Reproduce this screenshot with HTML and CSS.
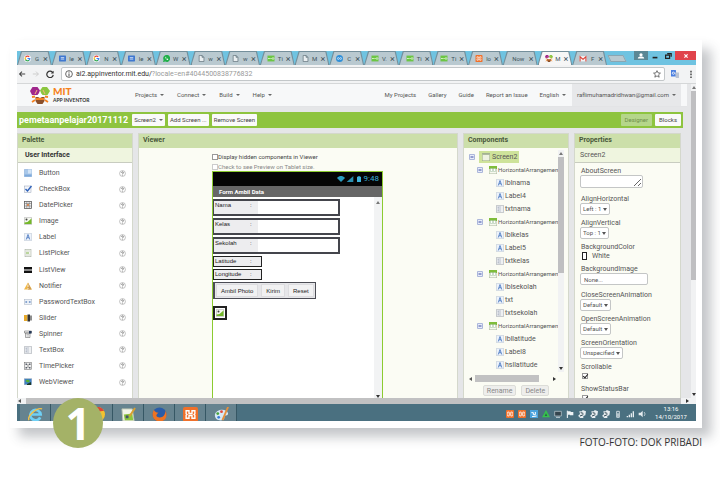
FILE: index.html
```
<!DOCTYPE html>
<html lang="en">
<head>
<meta charset="utf-8">
<title>MIT App Inventor</title>
<link rel="stylesheet" href="styles.css">
</head>
<body>
<svg class="defs" aria-hidden="true">
  <symbol id="google" viewBox="0 0 12 12"><circle cx="6" cy="6" r="6" fill="#fff"/><g fill="none" stroke-width="2"><path d="M9 3.2A4 4 0 0 0 2.6 4" stroke="#ea4335"/><path d="M2.6 4a4 4 0 0 0 0 4" stroke="#fbbc05"/><path d="M2.6 8a4 4 0 0 0 6 1" stroke="#34a853"/><path d="M8.6 9A4 4 0 0 0 10 6H6" stroke="#4285f4"/></g></symbol>
  <symbol id="docs" viewBox="0 0 12 12"><rect y="1" width="12" height="10" rx="1" fill="#3f78d0"/><path d="M3 4.5h6M3 7h6" stroke="#e3ecfa" stroke-width="1.4"/></symbol>
  <symbol id="whatsapp" viewBox="0 0 12 12"><path d="M0 12l1-3.500A6 6 0 1 1 4 11.300z" fill="#22b04a"/><path d="M4 3.500c0 3 2 5 4.500 5l.5-1.500-1.500-.8-1 .8L5 5.500l.6-1L5 3z" fill="#fff"/></symbol>
  <symbol id="page" viewBox="0 0 12 12"><path d="M2 .8h5L10.200 4v7.200H2zM7 .8V4h3" fill="#e9eef0" stroke="#60717a" stroke-width="1.200"/></symbol>
  <symbol id="green" viewBox="0 0 12 12"><rect y="1" width="12" height="10" fill="#6cc644"/><path d="M1 6h3M5 6h2" stroke="#e8ffd8" stroke-width="1.500"/><circle cx="9.500" cy="6" r="1.500" fill="none" stroke="#fff"/></symbol>
  <symbol id="cloud" viewBox="0 0 12 12"><circle cx="6" cy="6" r="6" fill="#2f8fd8"/><circle cx="4" cy="6" r="1.600" fill="none" stroke="#fff"/><circle cx="8" cy="6" r="1.600" fill="none" stroke="#fff"/></symbol>
  <symbol id="xampp" viewBox="0 0 12 12"><rect width="12" height="12" rx="1.500" fill="#f0702a"/><path d="M2.500 3h2.300v2.200h2.400V3h2.300v2.300L8.800 6l.7.700V9H7.200V6.800H4.800V9H2.500V6.700L3.200 6l-.7-.7z" fill="none" stroke="#fff" stroke-width="1.100"/></symbol>
  <symbol id="bee" viewBox="0 0 20 17"><path d="M0 4l2.500-4h5L10 3.500 8 8H2z" fill="#a0278c"/><path d="M10 3.500l2.500-3.500h4.500L20 4l-2.500 4H12z" fill="#8cc63f"/><path d="M5.500 10h9v4l-2 3h-5l-2-3z" fill="#8a4f2a"/><path d="M6 9l4-3 4 3-4 2z" fill="#fff"/><path d="M5 9.500l-3 .5M5 13l-3 2M15 9.500l3 .5M15 13l3 2M6 12h8" stroke="#f58220" stroke-width="1.800"/><path d="M7 3l-2 4M13 3l2 4" stroke="#f9b27a"/></symbol>
  <symbol id="gmail" viewBox="0 0 12 12"><rect y="2" width="12" height="9" fill="#f4f4f4"/><path d="M1 11V3l5 4.500L11 3v8" fill="none" stroke="#d93f35" stroke-width="1.800"/></symbol>
  <symbol id="help" viewBox="0 0 12 12"><circle cx="6" cy="6" r="5" fill="#fff" stroke="#999" stroke-width="1"/><path d="M4.300 4.600c.2-2 3.400-1.600 3.200.3C7.400 6 6 6 6 7.200M6 8.200v1.200" fill="none" stroke="#444" stroke-width="1.200"/></symbol>
  <symbol id="i-button" viewBox="0 0 16 16"><rect x=".5" y=".5" width="15" height="15" rx="1" fill="#a9c8ea" stroke="#7fa5d0"/><path d="M8 1h7v8H8z" fill="#d3e4f6"/><path d="M1 11h14v4H1z" fill="#7faadb"/></symbol>
  <symbol id="i-check" viewBox="0 0 16 16"><rect x="1" y="2" width="13" height="13" fill="#f3f5fa" stroke="#98a4b8"/><path d="M3 8l4 4 8-10" fill="none" stroke="#2c5fb8" stroke-width="2.800"/></symbol>
  <symbol id="i-date" viewBox="0 0 16 16"><rect x="1" y="1" width="14" height="14" fill="#eee" stroke="#555" stroke-width="1.500"/><path d="M1 5h14M5.500 1v14M10.500 1v14M1 10h14" stroke="#666"/><rect x="6" y="6" width="4" height="4" fill="#d78a56"/></symbol>
  <symbol id="i-image" viewBox="0 0 16 16"><rect x=".5" y="1.500" width="15" height="13" fill="#f5f8f0" stroke="#aaa"/><circle cx="5" cy="5" r="2" fill="#444"/><path d="M1 14v-3l6-1 8-7v11z" fill="#74b82a"/></symbol>
  <symbol id="i-label" viewBox="0 0 16 16"><rect x=".5" y=".5" width="15" height="15" rx="1" fill="#edf3fb" stroke="#a9b5c5"/><path d="M4.500 13L8 3l3.500 10M6 9.500h4" fill="none" stroke="#3f70bd" stroke-width="1.600"/></symbol>
  <symbol id="i-list" viewBox="0 0 16 16"><rect x="2" y=".5" width="12" height="15" fill="#f4f6f0" stroke="#9aa396"/><path d="M4 4h8M4 12h8" stroke="#b6beb0"/><path d="M4 8h6" stroke="#80b44a" stroke-width="2"/></symbol>
  <symbol id="i-view" viewBox="0 0 16 16"><path d="M0 2h16v5H0zM0 9h16v5H0z" fill="#111"/></symbol>
  <symbol id="i-note" viewBox="0 0 16 16"><path d="M8 1l8 14H0z" fill="#efb748"/><path d="M8 2v13h7z" fill="#c99a5a"/><path d="M8 5v5M8 12v2" stroke="#fff" stroke-width="1.500"/></symbol>
  <symbol id="i-pass" viewBox="0 0 16 16"><rect x=".5" y="3" width="15" height="10" fill="#edf2f8" stroke="#a7b2c2"/><path d="M3 6l3 4M6 6l-3 4M10 6l3 4M13 6l-3 4" stroke="#4c77b8" stroke-width="1.200"/></symbol>
  <symbol id="i-slider" viewBox="0 0 16 16"><rect y="2" width="7" height="12" fill="#e6a92b"/><rect x="7" y="1" width="5" height="14" fill="#333"/><rect x="12" y="3" width="4" height="10" fill="#8d8d8d"/></symbol>
  <symbol id="i-spin" viewBox="0 0 16 16"><path d="M1 2h14v4H1zM3 6h9v9H3z" fill="#f4f4f4" stroke="#555"/><path d="M10 2h5v5h-5z" fill="#263a5b"/><path d="M5 9h5M5 12h5" stroke="#888"/></symbol>
  <symbol id="i-text" viewBox="0 0 16 16"><rect x=".5" y="1.500" width="15" height="13" fill="#eef0f2" stroke="#9aa0a8"/><path d="M3 4h3M4.500 4v8M3 12h3M8 2v12" stroke="#8b97aa"/></symbol>
  <symbol id="i-time" viewBox="0 0 16 16"><rect x=".7" y=".7" width="14.600" height="14.600" fill="#eee" stroke="#666"/><path d="M3 3h3v3H3zM3 10h3v3H3zM10 3h3v3h-3zM10 10h3v3h-3z" fill="#59606c"/><path d="M8 5v2M8 9v2" stroke="#333" stroke-width="2"/></symbol>
  <symbol id="i-web" viewBox="0 0 16 16"><rect x=".5" y="1.500" width="15" height="12" fill="#3f7fc4" stroke="#9ab"/><path d="M3 5l5-2 4 3-3 3-4-1z" fill="#58b034"/><path d="M6 12l8-4v6H6z" fill="#1d3a2a"/></symbol>
  <symbol id="i-arr" viewBox="0 0 16 16"><rect x=".5" y=".5" width="15" height="15" fill="#f6f9ef" stroke="#a9b79c"/><path d="M0 0h16v6H0z" fill="#7fbd3b"/><path d="M3 5h4v6H3zM9 5h4v6H9z" fill="#fff" stroke="#9ab89a"/></symbol>
  <symbol id="i-screen" viewBox="0 0 16 16"><rect x=".5" y=".5" width="15" height="15" fill="#eef2e2" stroke="#9aa98a"/><path d="M1 2h14" stroke="#9aa98a" stroke-width="3"/></symbol>
  <symbol id="minus" viewBox="0 0 10 10"><rect x=".7" y=".7" width="8.600" height="8.600" rx="1" fill="#e8edfa" stroke="#7484c4"/><path d="M2.500 5h5" stroke="#2a3a9a" stroke-width="1.500"/></symbol>
  <symbol id="plane" viewBox="0 0 12 12"><path d="M0 9l3-3-1-4h4l1-2 5 2-1 6-3 1v3H3l-1-2z" fill="#e9eef0"/><path d="M4 4l4 1M3 9l5-2" stroke="#2c444f" stroke-width="1.500"/></symbol>
</svg>
<figure class="photo">
  <div class="screen">
    <div class="tabstrip">
      <div class="tabs">
        <div class="tab"><svg><use href="#google"/></svg><span>G</span><b>×</b></div>
        <div class="tab"><svg><use href="#docs"/></svg><span>le</span><b>×</b></div>
        <div class="tab"><svg><use href="#google"/></svg><span>N</span><b>×</b></div>
        <div class="tab"><svg><use href="#docs"/></svg><span>le</span><b>×</b></div>
        <div class="tab"><svg><use href="#whatsapp"/></svg><span>W</span><b>×</b></div>
        <div class="tab"><svg><use href="#page"/></svg><span>w</span><b>×</b></div>
        <div class="tab"><svg><use href="#page"/></svg><span>w</span><b>×</b></div>
        <div class="tab"><svg class="wide"><use href="#green"/></svg><span>Ti</span><b>×</b></div>
        <div class="tab"><svg><use href="#page"/></svg><span>M</span><b>×</b></div>
        <div class="tab"><svg><use href="#cloud"/></svg><span>C</span><b>×</b></div>
        <div class="tab"><svg class="wide"><use href="#green"/></svg><span>V.</span><b>×</b></div>
        <div class="tab"><svg class="wide"><use href="#green"/></svg><span>Ti</span><b>×</b></div>
        <div class="tab"><svg class="wide"><use href="#green"/></svg><span>Ti</span><b>×</b></div>
        <div class="tab"><svg class="wide"><use href="#xampp"/></svg><span>lo</span><b>×</b></div>
        <div class="tab"><span>Now</span><b>×</b></div>
        <div class="tab active"><svg class="wide"><use href="#bee"/></svg><span>M</span><b>×</b></div>
        <div class="tab"><svg class="wide"><use href="#gmail"/></svg><span>F</span><b>×</b></div>
      </div>
      <button class="newtab" aria-label="New tab"></button>
      <div class="controls">
        <button class="user" aria-label="Profile"><svg viewBox="0 0 10 8"><circle cx="5" cy="2.500" r="2" fill="#fff"/><path d="M1 7c0-3 8-3 8 0z" fill="#fff"/></svg></button>
        <button aria-label="Minimize"><svg viewBox="0 0 10 8"><path d="M2 6h6" stroke="#222" stroke-width="2"/></svg></button>
        <button aria-label="Restore"><svg viewBox="0 0 10 8"><path d="M2 3h5v4H2zM4 1h5v4" fill="none" stroke="#222" stroke-width="1.500"/></svg></button>
        <button class="close" aria-label="Close"><svg viewBox="0 0 10 8"><path d="M3 2l4 4M7 2L3 6" stroke="#fff" stroke-width="1.500"/></svg></button>
      </div>
    </div>
    <div class="toolbar">
      <button aria-label="Back"><svg viewBox="0 0 10 10"><path d="M9 5H2M5 2L2 5l3 3" fill="none" stroke="#444" stroke-width="1.300"/></svg></button>
      <button aria-label="Forward"><svg viewBox="0 0 10 10"><path d="M1 5h7M5 2l3 3-3 3" fill="none" stroke="#ccc" stroke-width="1.200"/></svg></button>
      <button aria-label="Reload"><svg viewBox="0 0 10 10"><path d="M8.500 3.500A4 4 0 1 0 9 6" fill="none" stroke="#333" stroke-width="1.500"/><path d="M9.500 1v3.500H6z" fill="#333"/></svg></button>
      <div class="omnibox">
        <svg viewBox="0 0 10 10"><circle cx="5" cy="5" r="4.200" fill="none" stroke="#444" stroke-width="1"/><path d="M5 2v1.300M5 4.300V8" stroke="#444" stroke-width="1.200"/></svg>
        <span class="url"><em>ai2.appinventor.mit.edu/</em>?locale=en#4044500838776832</span>
        <svg viewBox="0 0 10 10"><path d="M5 .8l1.300 2.800 3 .3L7 6l.7 3L5 7.400 2.300 9 3 6 .7 3.900l3-.3z" fill="#fff" stroke="#444" stroke-width=".9"/></svg>
      </div>
      <svg class="ext" viewBox="0 0 10 10"><path d="M0 0h6l1 8H0z" fill="#4a7fe0"/><path d="M5 3h5v7H6z" fill="#b9c3d4"/><circle cx="3" cy="4" r="1.400" fill="none" stroke="#fff"/></svg>
      <svg class="more" viewBox="0 0 4 10"><path d="M1 1h2v2H1zM1 4.500h2v2H1zM1 8h2v2H1z" fill="#555"/></svg>
    </div>
    <div class="browser">
      <div class="app">
        <header class="top">
          <svg class="logo"><use href="#bee"/></svg>
          <div class="brand"><strong>MIT</strong><span>APP INVENTOR</span></div>
          <nav class="menus">
            <button class="menu">Projects</button><button class="menu">Connect</button><button class="menu">Build</button><button class="menu">Help</button>
          </nav>
          <nav class="links">
            <a href="#">My Projects</a><a href="#">Gallery</a><a href="#">Guide</a><a href="#">Report an Issue</a><button class="menu">English</button>
          </nav>
          <button class="menu account">raflimuhamadridhwan@gmail.com</button>
        </header>
        <div class="projectbar">
          <h1>pemetaanpelajar20171112</h1>
          <button class="menu">Screen2</button><button>Add Screen ...</button><button>Remove Screen</button>
          <span class="spacer"></span>
          <button class="current">Designer</button><button>Blocks</button>
        </div>
        <main class="workspace">
          <section class="panel palette">
            <h2>Palette</h2>
            <h3>User Interface</h3>
            <ul>
              <li><svg><use href="#i-button"/></svg><span>Button</span><svg><use href="#help"/></svg></li>
              <li><svg><use href="#i-check"/></svg><span>CheckBox</span><svg><use href="#help"/></svg></li>
              <li><svg><use href="#i-date"/></svg><span>DatePicker</span><svg><use href="#help"/></svg></li>
              <li><svg><use href="#i-image"/></svg><span>Image</span><svg><use href="#help"/></svg></li>
              <li><svg><use href="#i-label"/></svg><span>Label</span><svg><use href="#help"/></svg></li>
              <li><svg><use href="#i-list"/></svg><span>ListPicker</span><svg><use href="#help"/></svg></li>
              <li><svg><use href="#i-view"/></svg><span>ListView</span><svg><use href="#help"/></svg></li>
              <li><svg><use href="#i-note"/></svg><span>Notifier</span><svg><use href="#help"/></svg></li>
              <li><svg><use href="#i-pass"/></svg><span>PasswordTextBox</span><svg><use href="#help"/></svg></li>
              <li><svg><use href="#i-slider"/></svg><span>Slider</span><svg><use href="#help"/></svg></li>
              <li><svg><use href="#i-spin"/></svg><span>Spinner</span><svg><use href="#help"/></svg></li>
              <li><svg><use href="#i-text"/></svg><span>TextBox</span><svg><use href="#help"/></svg></li>
              <li><svg><use href="#i-time"/></svg><span>TimePicker</span><svg><use href="#help"/></svg></li>
              <li><svg><use href="#i-web"/></svg><span>WebViewer</span><svg><use href="#help"/></svg></li>
            </ul>
          </section>
          <section class="panel viewer">
            <h2>Viewer</h2>
            <div class="stage">
              <label class="option"><input type="checkbox">Display hidden components in Viewer</label>
              <label class="option dim"><input type="checkbox">Check to see Preview on Tablet size.</label>
              <div class="phone">
                <div class="status">
                  <svg viewBox="0 0 12 9"><path d="M0 3c4-4 8-4 12 0L6 9z" fill="#2b9dc0"/></svg>
                  <svg viewBox="0 0 12 9"><path d="M11 0v9H1z" fill="#2b8fb0"/></svg>
                  <svg viewBox="0 0 12 9"><path d="M3 1h2V0h2v1h2v8H3z" fill="#3db4dc"/></svg>
                  <span>9:48</span>
                </div>
                <div class="title">Form Ambil Data</div>
                <div class="canvas">
                  <div class="form">
                    <label class="field"><span>Nama</span><i>:</i><input type="text"></label>
                    <label class="field"><span>Kelas</span><i>:</i><input type="text"></label>
                    <label class="field"><span>Sekolah</span><i>:</i><input type="text"></label>
                    <div class="field short"><span>Latitude</span><i>:</i></div>
                    <div class="field short"><span>Longitude</span><i>:</i></div>
                    <div class="actions"><button>Ambil Photo</button><button>Kirim</button><button>Reset</button></div>
                    <div class="picture"><svg><use href="#i-image"/></svg></div>
                  </div>
                  <div class="track"><i class="up"></i><i class="down"></i></div>
                </div>
              </div>
            </div>
          </section>
          <section class="panel components">
            <h2>Components</h2>
            <div class="treebox">
              <ul class="tree">
                <li class="root"><svg class="tog"><use href="#minus"/></svg><span class="selected"><svg><use href="#i-screen"/></svg>Screen2</span></li>
                <li class="group"><svg class="tog"><use href="#minus"/></svg><svg><use href="#i-arr"/></svg>HorizontalArrangemen</li>
                <li><svg><use href="#i-label"/></svg>lblnama</li>
                <li><svg><use href="#i-label"/></svg>Label4</li>
                <li><svg><use href="#i-text"/></svg>txtnama</li>
                <li class="group"><svg class="tog"><use href="#minus"/></svg><svg><use href="#i-arr"/></svg>HorizontalArrangemen</li>
                <li><svg><use href="#i-label"/></svg>lblkelas</li>
                <li><svg><use href="#i-label"/></svg>Label5</li>
                <li><svg><use href="#i-text"/></svg>txtkelas</li>
                <li class="group"><svg class="tog"><use href="#minus"/></svg><svg><use href="#i-arr"/></svg>HorizontalArrangemen</li>
                <li><svg><use href="#i-label"/></svg>lblsekolah</li>
                <li><svg><use href="#i-label"/></svg>txt</li>
                <li><svg><use href="#i-text"/></svg>txtsekolah</li>
                <li class="group"><svg class="tog"><use href="#minus"/></svg><svg><use href="#i-arr"/></svg>HorizontalArrangemen</li>
                <li><svg><use href="#i-label"/></svg>lbllatitude</li>
                <li><svg><use href="#i-label"/></svg>Label8</li>
                <li><svg><use href="#i-label"/></svg>hsllatitude</li>
              </ul>
              <div class="vbar"><i class="up"></i><i class="thumb"></i><i class="down"></i></div>
            </div>
            <div class="hbar"><i class="left"></i><i class="thumb"></i><i class="right"></i></div>
            <div class="buttons"><button>Rename</button><button>Delete</button></div>
          </section>
          <section class="panel properties">
            <h2>Properties</h2>
            <h3>Screen2</h3>
            <form>
              <div class="prop"><label for="about">AboutScreen</label><textarea id="about"></textarea></div>
              <div class="prop"><label for="ah">AlignHorizontal</label><span class="pick"><select id="ah"><option>Left : 1</option></select></span></div>
              <div class="prop"><label for="av">AlignVertical</label><span class="pick"><select id="av"><option>Top : 1</option></select></span></div>
              <div class="prop"><label for="bg">BackgroundColor</label><button class="color" id="bg" type="button"><i></i>White</button></div>
              <div class="prop"><label for="bi">BackgroundImage</label><input id="bi" type="text" value="None..."></div>
              <div class="prop"><label for="ca">CloseScreenAnimation</label><span class="pick"><select id="ca"><option>Default</option></select></span></div>
              <div class="prop"><label for="oa">OpenScreenAnimation</label><span class="pick"><select id="oa"><option>Default</option></select></span></div>
              <div class="prop"><label for="so">ScreenOrientation</label><span class="pick"><select id="so"><option>Unspecified</option></select></span></div>
              <div class="prop"><label for="sc">Scrollable</label><input id="sc" type="checkbox" checked></div>
              <div class="prop"><label for="sb">ShowStatusBar</label><input id="sb" type="checkbox" checked></div>
            </form>
          </section>
        </main>
      </div>
      <div class="vbar page-v"><i class="up"></i><i class="thumb"></i><i class="down"></i></div>
    </div>
    <div class="hbar page-h"><i class="left"></i><i class="thumb"></i><i class="right"></i></div>
    <div class="taskbar">
      <button aria-label="Internet Explorer"><svg viewBox="0 0 16 16"><path d="M13 11a5.500 5.500 0 1 1 .5-3H4" fill="none" stroke="#6fd0f5" stroke-width="2.800"/><path d="M1 14C-1 10 9 0 15 2" fill="none" stroke="#f0c24a" stroke-width="1.500"/></svg></button>
      <button aria-label="Files"><svg viewBox="0 0 16 16"><path d="M1 3h6l1 2h7v9H1z" fill="#efcf72"/></svg></button>
      <button aria-label="Chrome"><svg viewBox="0 0 16 16"><circle cx="8" cy="8" r="8" fill="#f2c230"/><path d="M1 4a8 8 0 0 1 14 0L8 5z" fill="#dc4437"/><path d="M1 4a8 8 0 0 0 6 12l2-6z" fill="#36a556"/><circle cx="8" cy="8" r="3" fill="#4285f4" stroke="#fff"/></svg></button>
      <button aria-label="Notepad++"><svg viewBox="0 0 16 16"><path d="M1 2h11l2 13H2z" fill="#f2f5e8" stroke="#bcc4b0"/><path d="M3 8l9-1 1 7H4z" fill="#8cc63f"/><path d="M5 9h3v3H5z" fill="#456"/><path d="M15 1L9 10" stroke="#d8a030" stroke-width="2"/></svg></button>
      <button aria-label="Firefox"><svg viewBox="0 0 16 16"><circle cx="8" cy="8" r="7.500" fill="#2a5ca8"/><path d="M2 3c-4 7 1 13 7 12.500S17 9 14.500 4C14 9 11 12 7 11S5 7 7 6C4 6 3 5 2 3z" fill="#ee7322"/></svg></button>
      <button aria-label="XAMPP"><svg><use href="#xampp"/></svg></button>
      <button aria-label="Paint"><svg viewBox="0 0 16 16"><path d="M1 8c1-6 13-7 14-1 0 3-4 1-4 4 1 5-11 5-10-3z" fill="#d7e9f5"/><circle cx="4" cy="7" r="1.500" fill="#46a43c"/><circle cx="8" cy="5" r="1.500" fill="#e24a3b"/><circle cx="5" cy="11" r="1.500" fill="#3b7dd8"/><path d="M15 0L9 14" stroke="#e6903c" stroke-width="2"/></svg></button>
      <div class="tray">
        <svg><use href="#xampp"/></svg><svg><use href="#xampp"/></svg>
        <svg viewBox="0 0 12 12"><rect width="12" height="12" fill="#4aa3dd"/><path d="M2 4h3v3h3V3M3 10l7-1" fill="none" stroke="#fff" stroke-width="1.500"/></svg>
        <svg viewBox="0 0 12 12"><path d="M6 0l6 11H0z" fill="#35c24c"/><path d="M6 5l2 4H4z" fill="#2a6a4a"/></svg>
        <svg viewBox="0 0 12 12"><path d="M1 2h10v7H1z" fill="#34454e" stroke="#c9d4d9"/><path d="M3 11h6" stroke="#fff"/></svg>
        <svg viewBox="0 0 12 12"><path d="M2 1v11" stroke="#fff" stroke-width="1.500"/><path d="M3 2h4v1h4v5H6V7H3z" fill="#eef3f5"/></svg>
        <svg><use href="#plane"/></svg><svg><use href="#plane"/></svg><svg><use href="#plane"/></svg>
        <svg viewBox="0 0 12 12"><path d="M4 2h4v9H4z" fill="none" stroke="#dfe7ea" stroke-width="1.300"/><path d="M5 5h2v5H5z" fill="#dfe7ea"/></svg>
        <svg viewBox="0 0 12 12"><path d="M1 9h2v2H1zM4 7h2v4H4zM7 5h2v6H7zM10 2h2v9h-2z" fill="#e7edf0"/></svg>
        <svg viewBox="0 0 12 12"><path d="M1 4h3l3-3v10L4 8H1z" fill="#e7edf0"/><path d="M9 3c2 2 2 4 0 6" fill="none" stroke="#e7edf0"/></svg>
      </div>
      <time>13:16<br>14/10/2017</time>
    </div>
  </div>
  <span class="number">1</span>
</figure>
<p class="caption">FOTO-FOTO: DOK PRIBADI</p>
</body>
</html>
```
FILE: styles.css
```
* { box-sizing: border-box; }
body { margin: 0; padding: 40px 18px 0 10px; background: #fff; font: 7px/10px Roboto, sans-serif; color: #555; }
button, input, select, textarea { font: inherit; color: inherit; margin: 0; padding: 0; border: 0; background: none; }
button { white-space: nowrap; }
h1, h2, h3, ul, p, figure { margin: 0; padding: 0; }
ul { list-style: none; }
a { color: inherit; text-decoration: none; }
svg { display: block; flex: none; width: 8px; height: 8px; }
.defs { position: absolute; width: 0; height: 0; }

.photo { position: relative; padding: 11px 6px 7px 7px; background: #fff; box-shadow: 9px 9px 11px rgba(60, 65, 75, .3); }
.screen { overflow: hidden; }
.number { position: absolute; left: 43px; bottom: -20px; width: 50px; height: 50px; border-radius: 50%; background: #a4b267; color: #fff; font: bold 44px/50px "Open Sans", sans-serif; text-align: center; }
.caption { margin-top: 7px; text-align: right; color: #333; font: 10px/14px "Open Sans", sans-serif; }

/* browser window */
.tabstrip { display: flex; height: 14px; background: #6fc3e1; align-items: stretch; }
.tabs { flex: 1; display: flex; min-width: 0; }
.tab { flex: 1 1 0; min-width: 0; display: flex; align-items: center; gap: 2px; padding: 1px 4px 0 7px; position: relative; z-index: 0; color: #40525b; font-size: 6px; }
.tab::before, .tab::after { content: ""; position: absolute; inset: 0; z-index: -1; clip-path: polygon(4px 0, calc(100% - 3px) 0, 100% 100%, 0 100%); background: #748f9b; }
.tab::after { inset: 1px 1px 0; background: #b9c9d0; }
.tab.active::after { background: #f6f6f6; }
.tab span { flex: 1; white-space: nowrap; text-align: center; }
.tab b { font-size: 9px; font-weight: normal; }
.tab svg { width: 7px; height: 7px; }
.tab svg.wide { width: 8px; }
.newtab { width: 16px; height: 7px; margin: 4px 9px 0 2px; background: #b9c9d0; border: 1px solid #8aa6b2; transform: skewX(25deg); }
.controls { display: flex; width: 62px; height: 9px; }
.controls button { flex: 1; display: grid; place-items: center; }
.controls .user { background: #5b8795; }
.controls .close { flex: 0 0 21px; background: #e0434b; }
.toolbar { display: flex; align-items: center; gap: 6px; height: 19px; padding: 0 3px 0 1px; background: #f2f3f4; border-bottom: 1px solid #d5d7d8; }
.omnibox { flex: 1; display: flex; align-items: center; gap: 3px; height: 14px; margin-left: 1px; padding: 0 3px; background: #fff; border: 1px solid #c3c7c9; border-radius: 2px; }
.url { flex: 1; color: #999; }
.url em { font-style: normal; color: #333; }
.more { width: 4px; margin-left: 4px; }
.browser { display: flex; background: #e5e6e8; }
.app { flex: 1; min-width: 0; }

/* scroll bars */
.up, .down { border: 2px solid transparent; width: 0; height: 0; }
.up { border-bottom: 3px solid #777; border-top: 0; }
.down { border-top: 3px solid #333; border-bottom: 0; }
.left, .right { border: 2px solid transparent; width: 0; height: 0; }
.left { border-right: 3px solid #555; border-left: 0; }
.right { border-left: 3px solid #333; border-right: 0; }
.vbar { flex: none; width: 6px; padding: 2px 0; display: flex; flex-direction: column; align-items: center; background: #f1f2f3; }
.vbar .thumb { width: 100%; height: 61%; margin: 2px 0 auto; background: #bfbfc1; }
.hbar { display: flex; align-items: center; background: #f1f2f3; }
.hbar .thumb { height: 100%; flex: 1; background: #c1c1c2; }
.page-v { width: 5px; }
.page-h { height: 6px; padding: 0 7px 0 1px; }
.page-h .thumb { margin: 0 5px; }

/* application header */
.top { display: flex; align-items: center; height: 23px; margin-right: 4px; padding-left: 13px; background: #f7f8f9; border-bottom: 1px solid #e3e4e6; color: #555; font-size: 6px; }
.logo { width: 20px; height: 17px; }
.brand { width: 85px; padding-left: 3px; font: bold 5px/7px Lato, sans-serif; color: #333; }
.brand strong { display: block; font: 900 10px/11px Lato, sans-serif; color: #f58220; }
.brand span { display: block; white-space: nowrap; }
.menus, .links { display: flex; gap: 13px; }
.links { gap: 12px; margin: 0 6px 0 auto; white-space: nowrap; }
.menu::after { content: ""; display: inline-block; margin-left: 3px; vertical-align: 1px; border: 2px solid transparent; border-top-color: #666; border-bottom: 0; }
.account { align-self: stretch; margin-right: 6px; padding: 0 5px; background: #e7e8ea; }
.projectbar { display: flex; align-items: center; gap: 3px; height: 16px; margin: 5px 8px 5px 0; padding: 0 2px; background: #8ec43f; }
.projectbar h1 { margin-right: 1px; font: bold 9px/14px Roboto, sans-serif; color: #fff; }
.projectbar button { height: 12px; padding: 0 2px; background: #fafafa; border-radius: 1px; font-size: 6px; color: #444; }
.projectbar .spacer ~ button { padding: 0 4px; }
.projectbar .current { background: #b5d68a; color: #6f8f4a; }
.spacer { flex: 1; }

/* workspace */
.workspace { display: grid; grid-template-columns: 116px minmax(0, 1fr) 106px 107px; gap: 5px; height: calc(100vh - 215px); padding-right: 10px; }
.panel { display: flex; flex-direction: column; min-width: 0; min-height: 0; overflow: hidden; background: #fbfcf4; border: 1px solid #d4d8cc; border-bottom: 0; }
h2 { flex: none; height: 14px; padding-left: 4px; background: #ccdfaa; font: bold 7px/13px Roboto, sans-serif; color: #49583a; }
h3 { flex: none; height: 15px; padding-left: 7px; background: #eff5df; border-bottom: 1px solid #c8ccc0; font: bold 7px/14px Roboto, sans-serif; color: #333; }
.palette { background: #fff; }
.palette ul { flex: 1; display: flex; flex-direction: column; padding: 2px 6px 8px; }
.palette li { flex: 1; display: flex; align-items: center; gap: 7px; }
.palette li span { flex: 1; }
.palette li svg:last-child { width: 7px; height: 7px; }

.stage { flex: 1; display: flex; flex-direction: column; min-height: 0; padding: 4px 0 0 73px; font-size: 6px; }
.option { display: flex; align-items: center; height: 10px; color: #444; }
.option.dim { color: #888; height: 9px; }
input[type=checkbox] { appearance: none; flex: none; width: 6px; height: 6px; background: #fff; border: 1px solid #999; }
.option.dim input { border-color: #ccc; }
.phone { flex: 1; display: flex; flex-direction: column; min-height: 0; width: 171px; background: #fff; border: 1px solid #8ccb30; border-bottom: 0; }
.status { flex: none; display: flex; justify-content: flex-end; align-items: center; gap: 1px; height: 14px; padding-right: 3px; background: #050505; color: #3db4dc; font-size: 8px; }
.title { flex: none; height: 11px; padding-left: 6px; background: #666; color: #fff; font: bold 6px/11px Roboto, sans-serif; }
.canvas { flex: 1; display: flex; min-height: 0; }
.track { width: 8px; background: #f2f3f4; display: flex; flex-direction: column; justify-content: space-between; align-items: center; padding-top: 4px; }
.form { flex: 1; display: flex; flex-direction: column; align-items: flex-start; gap: 2px; padding-top: 2px; font: 6px/8px "Liberation Sans", sans-serif; color: #222; }
.field { display: flex; width: 127px; height: 17px; padding-left: 1px; border: 2px solid #44454c; border-left-width: 1px; background: #ededef; }
.field span { width: 35px; }
.field i { width: 8px; font-style: normal; }
.field input { flex: 1; min-width: 0; background: #fff; }
.field.short { width: 49px; height: 11px; border-width: 1px; border-color: #222; }
.actions { display: flex; gap: 3px; height: 17px; padding: 1px; border: 1px solid #4b4c54; border-left-width: 2px; background: #e6e6e9; }
.actions button { padding: 0 4px; border: 1px solid #dcdcdf; background: #f1f1f2; }
.picture { margin-top: 5px; padding: 1px; border: 2px solid #222; }

.treebox { flex: 1; display: flex; min-height: 0; padding: 2px 4px 0 3px; }
.tree { flex: 1; min-width: 0; overflow: hidden; color: #555; }
.tree li { display: flex; align-items: center; gap: 1px; height: 13px; padding-left: 29px; white-space: nowrap; }
.tree .root { padding-left: 2px; gap: 4px; }
.tree .group { padding-left: 10px; font-size: 6px; }
.tree .tog { width: 6px; height: 6px; }
.tree .group .tog { margin-right: 5px; }
.selected { display: flex; align-items: center; gap: 2px; height: 12px; padding: 0 2px 0 3px; background: #cee39a; }
.treebox .vbar .thumb { height: 53%; }
.components .hbar { height: 7px; margin: 3px 12px 0 5px; background: #fbfcf4; }
.components .hbar .thumb { flex: none; width: 74%; margin: 0 auto 0 3px; }
.buttons { display: flex; justify-content: center; gap: 5px; padding: 3px 0 2px; }
.buttons button { height: 11px; padding: 0 3px; border: 1px solid #dcddd8; border-radius: 2px; background: #eeeeec; color: #888; }

.properties h3 { padding-left: 5px; font-weight: normal; color: #555; }
.properties form { display: flex; flex-direction: column; gap: 3px; padding: 3px 5px 0; }
.prop { display: flex; flex-direction: column; align-items: flex-start; }
.prop label { height: 9px; padding-left: 1px; white-space: nowrap; }
.prop textarea { width: 63px; height: 13px; margin-bottom: 3px; background: #fff; border: 1px solid #c4c6c6; border-radius: 2px; }
.prop input[type=text] { width: 68px; height: 12px; margin-bottom: 2px; padding-left: 3px; background: #fff; border: 1px solid #c4c6c6; border-radius: 2px; font-size: 6px; }
.pick { position: relative; display: block; height: 12px; background: #fff; border: 1px solid #c4c6c6; border-radius: 2px; font-size: 6px; }
.pick select { display: block; height: 10px; padding: 0 7px 0 2px; appearance: none; }
.pick::after { content: ""; position: absolute; right: 2px; top: 4px; border: 2px solid transparent; border-top: 3px solid #555; border-bottom: 0; pointer-events: none; }
.color { display: flex; align-items: center; gap: 5px; height: 10px; padding-left: 2px; }
.color i { width: 5px; height: 8px; border: 1px solid #222; background: #fff; }
.prop input[type=checkbox] { margin: 2px 0 2px 2px; }
input[type=checkbox]:checked::before { content: ""; display: block; width: 2px; height: 4px; margin: -1px 0 0 1px; border: solid #222; border-width: 0 1px 1px 0; transform: rotate(40deg); }

/* desktop task bar */
.taskbar { display: flex; height: 17px; padding: 0 9px 0 3px; background: #4a7080; overflow: hidden; }
.taskbar button { flex: none; width: 31px; display: grid; place-items: center; padding-top: 3px; background: #66838f; border-right: 1px solid #365764; }
.taskbar button svg { width: 15px; height: 15px; }
.tray { display: flex; align-items: center; gap: 4px; margin: 3px 9px 0 auto; }
time { height: 16px; padding-top: 1px; color: #fff; text-align: center; font: 6px/8px Roboto, sans-serif; }
```
